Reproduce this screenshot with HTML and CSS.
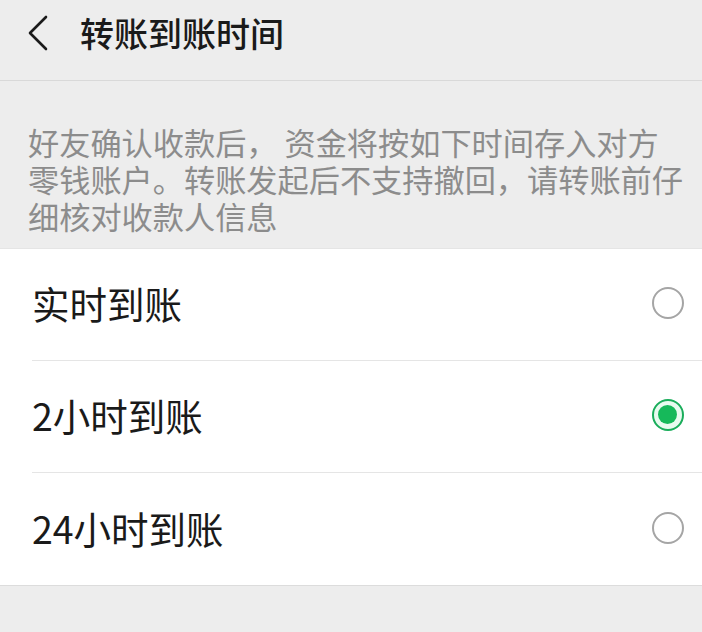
FILE: index.html
```html
<!DOCTYPE html>
<html lang="zh-CN">
<head>
    <meta charset="UTF-8">
    <meta name="viewport" content="width=device-width, initial-scale=1.0">
    <title>转账到账时间</title>
    <link rel="stylesheet" href="styles.css">
</head>
<body>

<div class="header">
    <button class="back" aria-label="返回">
        <svg width="22" height="36" viewBox="0 0 22 36">
            <polyline points="18,2 2,18 18,34" fill="none" stroke="#1a1a1a" stroke-width="2.6" stroke-linecap="round" stroke-linejoin="round"/>
        </svg>
    </button>
    <h1 class="title">转账到账时间</h1>
</div>

<p class="tip">好友确认收款后， 资金将按如下时间存入对方零钱账户。转账发起后不支持撤回，请转账前仔细核对收款人信息</p>

<ul class="options">
    <li class="option">
        <span class="label">实时到账</span>
        <span class="radio"></span>
    </li>
    <li class="option">
        <span class="label">2小时到账</span>
        <span class="radio checked"></span>
    </li>
    <li class="option">
        <span class="label">24小时到账</span>
        <span class="radio"></span>
    </li>
</ul>

</body>
</html>
```

FILE: styles.css
```css
* {
    margin: 0;
    padding: 0;
    box-sizing: border-box;
}

body {
    background: #ededed;
    font-family: "Noto Sans CJK SC", "Noto Sans", sans-serif;
    width: 702px;
    height: 632px;
    overflow: hidden;
}

.header {
    display: flex;
    align-items: center;
    height: 81px;
    border-bottom: 1px solid #d9d9d9;
    padding: 0 0 14px 28px;
}

.back {
    background: none;
    border: none;
    display: flex;
    align-items: center;
}

.title {
    font-size: 34px;
    font-weight: 500;
    color: #1a1a1a;
    margin-left: 30px;
    margin-top: -2px;
}

.tip {
    font-size: 31.2px;
    line-height: 37px;
    color: #8c8c8c;
    padding: 42px 0 14px 28px;
    width: 684px;
    height: 167px;
}

.options {
    list-style: none;
    background: #fff;
    border-top: 1px solid #e5e5e5;
    border-bottom: 1px solid #dcdcdc;
}

.option {
    display: flex;
    align-items: center;
    justify-content: space-between;
    height: 112px;
    margin-left: 32px;
    padding-right: 18px;
    border-bottom: 1px solid #e5e5e5;
}

.option:last-child {
    border-bottom: none;
}

.label {
    font-size: 37.5px;
    color: #1a1a1a;
    margin-top: -4px;
}

.radio {
    width: 32px;
    height: 32px;
    border-radius: 50%;
    border: 2.5px solid #a5a5a5;
    margin-top: -3px;
    position: relative;
}

.radio.checked {
    border-color: #1aad5b;
    background: #e8fbef;
}

.radio.checked::after {
    content: "";
    position: absolute;
    left: 4px;
    top: 4px;
    width: 19px;
    height: 19px;
    border-radius: 50%;
    background: #16b95a;
}
```
